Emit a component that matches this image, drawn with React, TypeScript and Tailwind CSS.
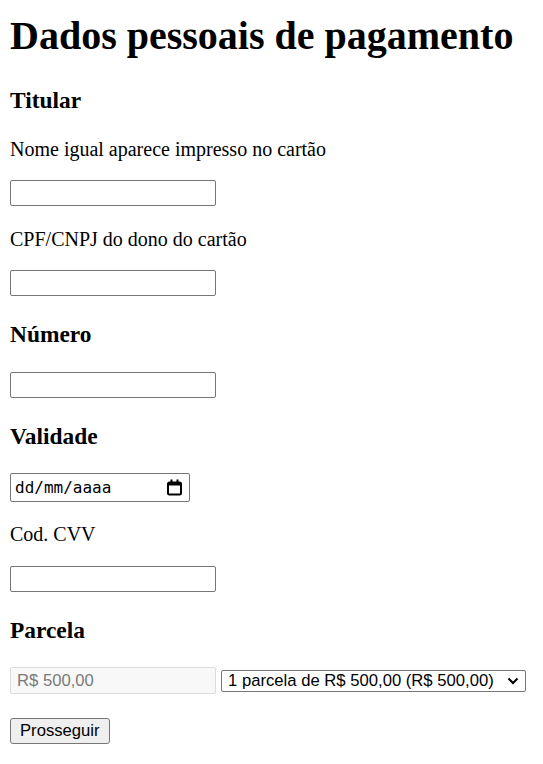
import React from "react";

const serif = "font-['Liberation_Serif','Times_New_Roman',serif]";
const sans = "font-['Liberation_Sans',Arial,sans-serif]";

function TextInput() {
  return (
    <input
      type="text"
      className={`block w-[206px] h-[26px] border border-[#767676] rounded-[2px] bg-white px-[2px] text-[16.67px] ${sans} text-black outline-none`}
    />
  );
}

function CalendarIcon() {
  return (
    <svg width="17" height="17" viewBox="0 0 17 17" fill="none">
      <rect x="2" y="3.5" width="13" height="12" rx="1.5" stroke="#000" strokeWidth="2" />
      <rect x="2" y="3.5" width="13" height="3" fill="#000" />
      <rect x="4.5" y="0.5" width="2" height="3.5" fill="#000" />
      <rect x="10.5" y="0.5" width="2" height="3.5" fill="#000" />
    </svg>
  );
}

export default function App() {
  return (
    <div className={`min-h-[764px] bg-white px-[10px] pt-[13px] text-black ${serif}`}>
      <h1 className="text-[40px] leading-[46px] font-bold">Dados pessoais de pagamento</h1>

      <h3 className="mt-[28px] text-[23.4px] leading-[27px] font-bold">Titular</h3>
      <p className="mt-[24px] text-[20px] leading-[23px]">Nome igual aparece impresso no cartão</p>
      <div className="mt-[19px]">
        <TextInput />
      </div>
      <p className="mt-[22px] text-[20px] leading-[23px]">CPF/CNPJ do dono do cartão</p>
      <div className="mt-[19px]">
        <TextInput />
      </div>

      <h3 className="mt-[25px] text-[23.4px] leading-[27px] font-bold">Número</h3>
      <div className="mt-[24px]">
        <TextInput />
      </div>

      <h3 className="mt-[25px] text-[23.4px] leading-[27px] font-bold">Validade</h3>
      <div className="mt-[23px]">
        <div className="flex items-center justify-between w-[180px] h-[29px] border border-[#767676] rounded-[2px] bg-white pl-[4px] pr-[6px]">
          <span className="font-['DejaVu_Sans_Mono','Liberation_Mono',monospace] text-[16px] leading-none text-black">
            dd/mm/aaaa
          </span>
          <CalendarIcon />
        </div>
      </div>

      <p className="mt-[21px] text-[20px] leading-[23px]">Cod. CVV</p>
      <div className="mt-[20px]">
        <TextInput />
      </div>

      <h3 className="mt-[25px] text-[23.4px] leading-[27px] font-bold">Parcela</h3>
      <div className="mt-[23px] flex items-center gap-[5px]">
        <div
          className={`flex items-center w-[206px] h-[27px] border border-[#dcdcdc] rounded-[2px] bg-[#f8f8f8] pl-[6px] text-[16.67px] ${sans} text-[#7a7a7a]`}
        >
          R$ 500,00
        </div>
        <div
          className={`flex items-center justify-between w-[305px] h-[22px] border border-[#767676] rounded-[2px] bg-white pl-[6px] pr-[6px] text-[16.67px] ${sans} text-black`}
        >
          <span>1 parcela de R$ 500,00 (R$ 500,00)</span>
          <svg width="12" height="8" viewBox="0 0 12 8" fill="none">
            <path d="M1.5 1.5 L6 6 L10.5 1.5" stroke="#000" strokeWidth="2" />
          </svg>
        </div>
      </div>

      <div className="mt-[24px]">
        <button
          className={`h-[26px] px-[9px] pt-[1px] border border-[#767676] rounded-[3px] bg-[#efefef] text-[16.67px] ${sans} text-black leading-none`}
        >
          Prosseguir
        </button>
      </div>
    </div>
  );
}
